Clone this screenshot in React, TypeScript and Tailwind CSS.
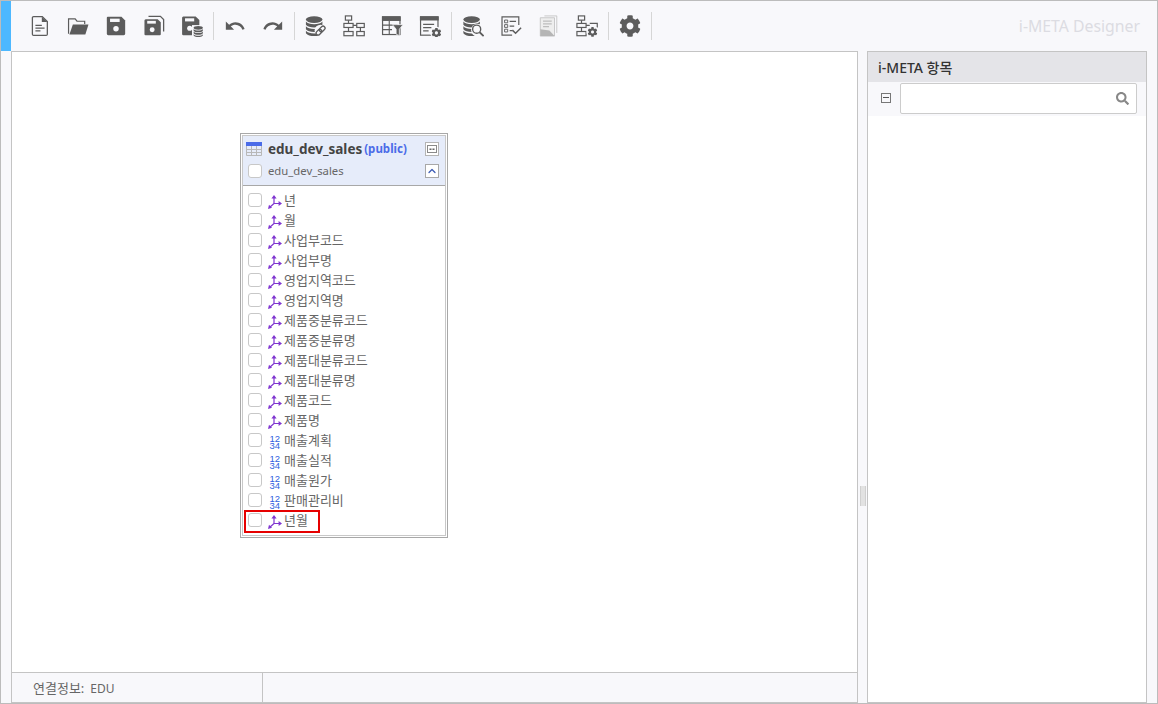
import { FaCog, FaSearch } from 'react-icons/fa';
import { ChevronUp } from 'lucide-react';

const GRAY = '#5c5c5c';

const Db = ({ x = 0, y = 0, s = 1 }: { x?: number; y?: number; s?: number }) => (
  <g transform={`translate(${x} ${y}) scale(${s})`} fill={GRAY}>
    <ellipse cx="10" cy="4" rx="9" ry="3.6" />
    <path d="M1 6.2c1.5 2 5 3 9 3s7.5-1 9-3v3.4c-1.5 2-5 3-9 3s-7.5-1-9-3z" />
    <path d="M1 11.2c1.5 2 5 3 9 3s7.5-1 9-3v3.4c-1.5 2-5 3-9 3s-7.5-1-9-3z" />
    <path d="M1 16.2c1.5 2 5 3 9 3s7.5-1 9-3v2.6c-1.5 2-5 3.2-9 3.2s-7.5-1.2-9-3.2z" />
  </g>
);

const SmallGear = ({ x, y, size = 11 }: { x: number; y: number; size?: number }) => (
  <g>
    <circle cx={x + size / 2} cy={y + size / 2} r={size / 2 + 1.2} fill="#f8f8fb" />
    <svg x={x} y={y} width={size} height={size} viewBox="0 0 512 512" fill={GRAY}>
      <path d="M487.4 315.7l-42.6-24.6c4.3-23.2 4.3-47 0-70.2l42.6-24.6c4.9-2.8 7.1-8.6 5.5-14-11.1-35.6-30-67.8-54.7-94.6-3.8-4.1-10-5.1-14.8-2.3L380.8 110c-17.9-15.4-38.5-27.3-60.8-35.1V25.8c0-5.6-3.9-10.5-9.4-11.7-36.7-8.2-74.3-7.8-109.2 0-5.5 1.2-9.4 6.1-9.4 11.7V75c-22.2 7.9-42.8 19.8-60.8 35.1L88.7 85.5c-4.9-2.8-11-1.9-14.8 2.3-24.7 26.7-43.6 58.9-54.7 94.6-1.7 5.4.6 11.2 5.5 14L67.3 221c-4.3 23.2-4.3 47 0 70.2l-42.6 24.6c-4.9 2.8-7.1 8.6-5.5 14 11.1 35.6 30 67.8 54.7 94.6 3.8 4.1 10 5.1 14.8 2.3l42.6-24.6c17.9 15.4 38.5 27.3 60.8 35.1v49.2c0 5.6 3.9 10.5 9.4 11.7 36.7 8.2 74.3 7.8 109.2 0 5.5-1.2 9.4-6.1 9.4-11.7v-49.2c22.2-7.9 42.8-19.8 60.8-35.1l42.6 24.6c4.9 2.8 11 1.9 14.8-2.3 24.7-26.7 43.6-58.9 54.7-94.6 1.5-5.5-.7-11.3-5.6-14.1zM256 336c-44.1 0-80-35.9-80-80s35.9-80 80-80 80 35.9 80 80-35.9 80-80 80z" />
    </svg>
  </g>
);

const TreeLeft = () => (
  <g fill="none" stroke={GRAY} strokeWidth="1.3">
    <rect x="2.6" y="1" width="6.8" height="4.6" />
    <rect x="1" y="9.2" width="10" height="4.4" />
    <rect x="1" y="18" width="10" height="4.6" />
    <path d="M6 5.6v3.6M6 13.6v4.4" />
  </g>
);

const Tree = () => (
  <g fill="none" stroke={GRAY} strokeWidth="1.3">
    <TreeLeft />
    <rect x="15" y="9.2" width="8.2" height="4.4" />
    <rect x="15" y="18" width="8.2" height="4.6" />
    <path d="M11 11.4h4M19 13.6v4.4" />
  </g>
);

const icons: Record<string, React.ReactNode> = {
  doc: (
    <>
      <path d="M5 1.7h9.5L20 7v14a1.3 1.3 0 0 1-1.3 1.3H5A1.3 1.3 0 0 1 3.7 21V3A1.3 1.3 0 0 1 5 1.7z" fill="none" stroke={GRAY} strokeWidth="1.4" />
      <path d="M14 2v5.6h6z" fill={GRAY} />
      <path d="M7 10.5h7v1.5H7zM7 13.5h10v1.5H7zM7 16.5h5.5V18H7z" fill={GRAY} />
    </>
  ),
  folder: (
    <>
      <path d="M1.7 20.5V4.2h7.2l2 2.6h8.4v3" fill="none" stroke={GRAY} strokeWidth="1.3" />
      <path d="M6.4 10.4H23.4L20 21.2H2.6z" fill={GRAY} />
    </>
  ),
  save: (
    <>
      <path d="M3 2h15l4 4v14.5a1.6 1.6 0 0 1-1.6 1.6H3.6A1.6 1.6 0 0 1 2 20.5V3a1 1 0 0 1 1-1z" fill={GRAY} />
      <rect x="5.5" y="4" width="10.5" height="3.6" fill="#f8f8fb" />
      <circle cx="12" cy="15" r="3" fill="#f8f8fb" />
    </>
  ),
  saveAll: (
    <>
      <path d="M6 1.5h13l3.5 3.5v13" fill="none" stroke={GRAY} strokeWidth="1.4" />
      <path d="M3 4.5h13l3.4 3.4V21a1.2 1.2 0 0 1-1.2 1.2H2.8A1.2 1.2 0 0 1 1.6 21V6a1.5 1.5 0 0 1 1.4-1.5z" fill={GRAY} />
      <rect x="4.6" y="6.4" width="9.4" height="3" fill="#f8f8fb" />
      <circle cx="10" cy="16" r="2.7" fill="#f8f8fb" />
    </>
  ),
  saveDb: (
    <>
      <path d="M2.5 1.5h13.5l4 4v16.7H2.6A1.4 1.4 0 0 1 1.2 21V3a1.5 1.5 0 0 1 1.3-1.5z" fill={GRAY} />
      <rect x="4.4" y="3.6" width="10" height="3.4" fill="#f8f8fb" />
      <circle cx="9.5" cy="14.4" r="2.8" fill="#f8f8fb" />
      <rect x="12" y="11" width="13" height="13" fill="#f8f8fb" />
      <Db x={13.2} y={11.8} s={0.56} />
    </>
  ),
  undo: <path d="M12.5 8c-2.65 0-5.05.99-6.9 2.6L2 7v9h9l-3.62-3.62c1.39-1.16 3.16-1.88 5.12-1.88 3.54 0 6.55 2.31 7.6 5.5l2.37-.78C21.08 11.03 17.15 8 12.5 8z" fill={GRAY} />,
  redo: <path transform="matrix(-1 0 0 1 24 0)" d="M12.5 8c-2.65 0-5.05.99-6.9 2.6L2 7v9h9l-3.62-3.62c1.39-1.16 3.16-1.88 5.12-1.88 3.54 0 6.55 2.31 7.6 5.5l2.37-.78C21.08 11.03 17.15 8 12.5 8z" fill={GRAY} />,
  dbLink: (
    <>
      <Db x={0} y={1} />
      <circle cx="17" cy="17" r="6.5" fill="#f8f8fb" />
      <g fill="none" stroke={GRAY} strokeWidth="1.4" transform="rotate(-45 17 17)">
        <rect x="11" y="14.8" width="7" height="4.4" rx="2.2" />
        <rect x="16" y="14.8" width="7" height="4.4" rx="2.2" />
      </g>
    </>
  ),
  tree: <Tree />,
  tableFilter: (
    <>
      <rect x="1.7" y="2" width="19" height="19.3" fill="none" stroke={GRAY} strokeWidth="1.3" />
      <rect x="1" y="1.5" width="20.5" height="5" fill={GRAY} />
      <path d="M2 11h16M2 16h10M9 6.5V21" stroke={GRAY} strokeWidth="1.2" />
      <path d="M12.5 10.5h11.5L20 15.5v7l-3.5-1.6v-5.4z" fill={GRAY} stroke="#f8f8fb" strokeWidth="0.8" />
    </>
  ),
  windowGear: (
    <>
      <rect x="1.7" y="2" width="19" height="20" fill="none" stroke={GRAY} strokeWidth="1.3" />
      <rect x="1" y="1.5" width="20.5" height="4.5" fill={GRAY} />
      <path d="M4.5 9.5h12v1.4h-12zM4.5 13h9v1.4h-9zM4.5 16.5h6v1.4h-6z" fill={GRAY} />
      <SmallGear x={13.5} y={14} />
    </>
  ),
  dbSearch: (
    <>
      <Db x={0.5} y={1} />
      <circle cx="17" cy="16.5" r="7" fill="#f8f8fb" />
      <circle cx="16" cy="15.5" r="4.4" fill="none" stroke={GRAY} strokeWidth="1.5" />
      <path d="M19.2 18.8l4.4 4.2" stroke={GRAY} strokeWidth="2" />
    </>
  ),
  checklist: (
    <>
      <path d="M20.5 11V2H2.2v20h11" fill="none" stroke={GRAY} strokeWidth="1.3" />
      <path d="M5 5.5h3.4v3H5zM5 10.5h3.4v3H5zM5 15.5h3.4v3H5z" fill="none" stroke={GRAY} strokeWidth="1" />
      <path d="M10.5 6.4h7v1.3h-7zM10.5 11.4h5v1.3h-5zM10.5 16.4h3v1.3h-3z" fill={GRAY} />
      <path d="M13.5 16.5l3.5 3.5 6-6" fill="none" stroke={GRAY} strokeWidth="1.6" />
    </>
  ),
  docs: (
    <>
      <path d="M7 1h13.5v18.5" fill="none" stroke="#c4c4c4" strokeWidth="1" />
      <path d="M2.5 3h15.5v20H2.5z" fill="#eeeeee" stroke="#c4c4c4" strokeWidth="1" />
      <path d="M5.5 6h9.5v1.3H5.5zM5.5 9h9.5v1.3H5.5zM5.5 12h6.5v1.3H5.5z" fill="#bdbdbd" />
      <path d="M2.5 15.5l10 1.5 5.5 6H2.5z" fill="#b5b5b5" />
    </>
  ),
  treeGear: (
    <>
      <TreeLeft />
      <g fill="none" stroke={GRAY} strokeWidth="1.3">
        <path d="M11 11.4h4M15 9.2h8.2v4.4" />
      </g>
      <SmallGear x={12.5} y={13} />
    </>
  ),
};

const toolbar = [
  ['doc', 'folder', 'save', 'saveAll', 'saveDb'],
  ['undo', 'redo'],
  ['dbLink', 'tree', 'tableFilter', 'windowGear'],
  ['dbSearch', 'checklist', 'docs', 'treeGear'],
];

const columns = [
  { name: '년', type: 'dim' },
  { name: '월', type: 'dim' },
  { name: '사업부코드', type: 'dim' },
  { name: '사업부명', type: 'dim' },
  { name: '영업지역코드', type: 'dim' },
  { name: '영업지역명', type: 'dim' },
  { name: '제품중분류코드', type: 'dim' },
  { name: '제품중분류명', type: 'dim' },
  { name: '제품대분류코드', type: 'dim' },
  { name: '제품대분류명', type: 'dim' },
  { name: '제품코드', type: 'dim' },
  { name: '제품명', type: 'dim' },
  { name: '매출계획', type: 'num' },
  { name: '매출실적', type: 'num' },
  { name: '매출원가', type: 'num' },
  { name: '판매관리비', type: 'num' },
  { name: '년월', type: 'dim' },
];

const ToolIcon = ({ name }: { name: string }) => (
  <div className="flex w-[38px] shrink-0 items-center justify-center">
    <svg width="22" height="22" viewBox="0 0 24 24">
      {icons[name]}
    </svg>
  </div>
);

const Separator = () => <div className="mx-[2px] h-[28px] w-px shrink-0 bg-[#d6d6d6]" />;

const Checkbox = () => (
  <span className="h-[14px] w-[14px] shrink-0 rounded-[3px] border border-[#c8c8c8] bg-white" />
);

const DimIcon = () => (
  <svg width="14" height="14" viewBox="0 0 14 14" className="mt-[3px] shrink-0">
    <path d="M6 2V8.5M6 8.5H12M6 8.5L1.5 12.5" fill="none" stroke="#7f35d0" strokeWidth="1.2" />
    <path d="M6 0L8.6 3.4H3.4zM14 8.5L10.6 6V11zM0 14L1 9.8 4 12.8z" fill="#7f35d0" />
  </svg>
);

const NumIcon = () => (
  <svg width="14" height="16" viewBox="0 0 14 16" className="mt-[3px] shrink-0">
    <g fill="#2f5fe0" fontSize="9.5" fontFamily='"Liberation Sans", sans-serif'>
      <text x="1.5" y="8">12</text>
      <text x="1.5" y="15">34</text>
    </g>
  </svg>
);

const TableIcon = () => (
  <svg width="16" height="14" viewBox="0 0 16 14" className="shrink-0">
    <rect x="0" y="0" width="16" height="4" fill="#4a6be8" />
    <path d="M.5 4v9.5h15V4M0 7.5h16M0 10.5h16M5.5 4v10M10.5 4v10" fill="none" stroke="#b8b8b8" />
  </svg>
);

export default function App() {
  return (
    <div
      className="flex h-[704px] w-[1158px] flex-col overflow-hidden border border-[#bcbcbc] bg-[#f8f8fb]"
      style={{ fontFamily: '"Noto Sans", "Noto Sans CJK KR", sans-serif' }}
    >
      {/* Toolbar */}
      <div className="flex h-[50px] shrink-0 items-center">
        <div className="h-full w-[10px] shrink-0 bg-[#4db8ff]" />
        <div className="ml-[10px] flex items-center">
          {toolbar.map((group, i) => (
            <div key={i} className="flex items-center">
              {group.map((name) => (
                <ToolIcon key={name} name={name} />
              ))}
              <Separator />
            </div>
          ))}
          <div className="flex w-[38px] items-center justify-center text-[22px] text-[#5c5c5c]">
            <FaCog />
          </div>
          <Separator />
        </div>
        <div className="ml-auto pt-[2px] pr-[17px] text-[15.8px] text-[#dcdce2]">i-META Designer</div>
      </div>

      <div className="flex min-h-0 flex-1">
        <div className="w-[10px] shrink-0" />

        {/* Canvas */}
        <div className="flex w-[847px] shrink-0 flex-col border border-[#c4c4c4]">
          <div className="relative flex-1 bg-white">
            <div className="absolute top-[81px] left-[228px] h-[405px] w-[208px] border border-[#a8a8a8] bg-white p-px">
              <div className="flex h-full flex-col border border-[#c8c8c8]">
                <div className="h-[50px] shrink-0 border-b border-[#a8a8a8] bg-[#e6ecfa] pl-[3px]">
                  <div className="flex h-[26px] items-center">
                    <TableIcon />
                    <span className="ml-[6px] text-[13.5px] font-bold text-[#444]">edu_dev_sales</span>
                    <span className="ml-[2px] text-[11.5px] font-bold text-[#4a6be8]">(public)</span>
                    <span className="mr-[6px] ml-auto flex h-[14px] w-[14px] items-center justify-center gap-[2px] border border-[#b4b4b4] bg-white">
                      <svg width="10" height="8" viewBox="0 0 10 8">
                        <rect x=".5" y=".5" width="9" height="7" fill="none" stroke="#8a8a8a" />
                        <path d="M2.5 3.5h2v1.5h-2zM5.5 3.5h2v1.5h-2z" fill="#666" />
                      </svg>
                    </span>
                  </div>
                  <div className="flex h-[18px] items-center pl-[2px] text-[11.3px] text-[#666]">
                    <Checkbox />
                    <span className="ml-[6px]">edu_dev_sales</span>
                    <span className="mr-[6px] ml-auto flex h-[14px] w-[14px] items-center justify-center border border-[#a8a8a8] bg-white text-[#3b5bb5]">
                      <ChevronUp size={12} strokeWidth={2.5} />
                    </span>
                  </div>
                </div>
                <div className="pt-[4px]">
                  {columns.map((col, i) => (
                    <div key={col.name} className="relative flex h-5 items-center pl-[5px] text-[13px] text-[#666]">
                      <Checkbox />
                      <span className="ml-[6px] mr-[2px] flex items-center">
                        {col.type === 'dim' ? <DimIcon /> : <NumIcon />}
                      </span>
                      <span className="pt-[1px]">{col.name}</span>
                      {i === columns.length - 1 && (
                        <span className="absolute top-0 left-[1px] h-[23px] w-[76px] border-2 border-[#e60000]" />
                      )}
                    </div>
                  ))}
                </div>
              </div>
            </div>
          </div>

          {/* Status bar */}
          <div className="flex h-[30px] shrink-0 border-t border-[#c4c4c4] bg-[#f8f8fb]">
            <div className="flex w-[251px] items-center border-r border-[#c4c4c4] pt-[3px] pl-[21px] text-[13px] text-[#666]">
              연결정보:<span className="ml-[6px] text-[12px]">EDU</span>
            </div>
          </div>
        </div>

        {/* Splitter */}
        <div className="flex w-[9px] shrink-0 items-center justify-center pt-[238px]">
          <div className="h-[20px] w-[6px] border-x border-[#d0d0d0] bg-[#e2e2e2]" />
        </div>

        {/* Meta panel */}
        <div className="flex w-[280px] shrink-0 flex-col border border-[#c4c4c4] bg-white">
          <div className="flex h-[30px] shrink-0 items-center bg-[#e4e4e8] pt-[1px] pl-[10px] text-[14px] font-medium text-[#333]">
            i-META 항목
          </div>
          <div className="flex h-[34px] shrink-0 items-center bg-[#f8f8fb] pr-[9px] pb-[2px] pl-[13px]">
            <span className="relative h-[10px] w-[10px] shrink-0 border border-[#777]">
              <span className="absolute top-[3px] left-[1px] h-px w-[6px] bg-[#555]" />
            </span>
            <div className="ml-[9px] flex h-[31px] flex-1 items-center justify-end rounded-[2px] border border-[#ccc] bg-white pr-[7px] text-[13px] text-[#888]">
              <FaSearch />
            </div>
          </div>
        </div>
      </div>
    </div>
  );
}
